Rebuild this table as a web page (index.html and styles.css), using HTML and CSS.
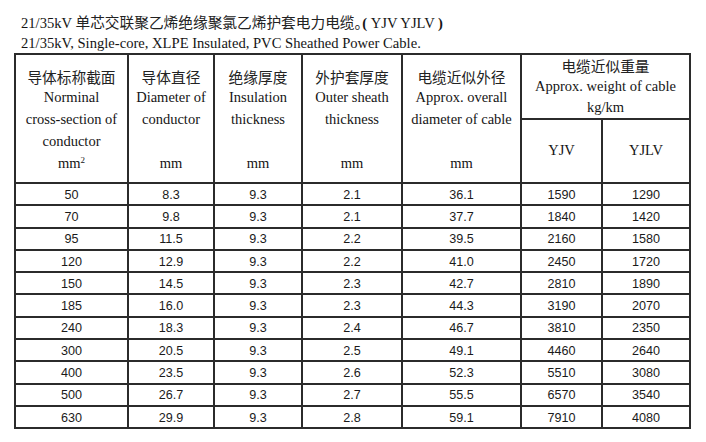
FILE: index.html
```html
<!DOCTYPE html>
<html lang="zh">
<head>
<meta charset="utf-8">
<title>21/35kV YJV YJLV</title>
<link rel="stylesheet" href="styles.css">
</head>
<body>
<div class="page">
  <p class="title">21/35kV <span class="zh">单芯交联聚乙烯绝缘聚氯乙烯护套电力电缆</span><span class="zh dot">。</span><b class="paren">(</b> YJV YJLV <b class="paren">)</b></p>
  <p class="title">21/35kV, Single-core, XLPE Insulated, PVC Sheathed Power Cable.</p>
  <table class="spec">
    <colgroup>
      <col class="c1"><col class="c2"><col class="c3"><col class="c4"><col class="c5"><col class="c6"><col class="c7">
    </colgroup>
    <thead>
      <tr class="h1">
        <th rowspan="2" class="main"><span class="ln zh">导体标称截面</span><span class="ln">Norminal</span><span class="ln">cross-section of</span><span class="ln">conductor</span><span class="ln">mm<sup>2</sup></span></th>
        <th rowspan="2" class="main"><span class="ln zh">导体直径</span><span class="ln">Diameter of</span><span class="ln">conductor</span><span class="ln">&nbsp;</span><span class="ln">mm</span></th>
        <th rowspan="2" class="main"><span class="ln zh">绝缘厚度</span><span class="ln">Insulation</span><span class="ln">thickness</span><span class="ln">&nbsp;</span><span class="ln">mm</span></th>
        <th rowspan="2" class="main"><span class="ln zh">外护套厚度</span><span class="ln">Outer sheath</span><span class="ln">thickness</span><span class="ln">&nbsp;</span><span class="ln">mm</span></th>
        <th rowspan="2" class="main"><span class="ln zh">电缆近似外径</span><span class="ln">Approx. overall</span><span class="ln">diameter of cable</span><span class="ln">&nbsp;</span><span class="ln">mm</span></th>
        <th colspan="2" class="grp"><span class="ln zh">电缆近似重量</span><span class="ln">Approx. weight of cable</span><span class="ln">kg/km</span></th>
      </tr>
      <tr class="h2">
        <th class="sub">YJV</th>
        <th class="sub">YJLV</th>
      </tr>
    </thead>
    <tbody>
      <tr><td>50</td><td>8.3</td><td>9.3</td><td>2.1</td><td>36.1</td><td>1590</td><td>1290</td></tr>
      <tr><td>70</td><td>9.8</td><td>9.3</td><td>2.1</td><td>37.7</td><td>1840</td><td>1420</td></tr>
      <tr><td>95</td><td>11.5</td><td>9.3</td><td>2.2</td><td>39.5</td><td>2160</td><td>1580</td></tr>
      <tr><td>120</td><td>12.9</td><td>9.3</td><td>2.2</td><td>41.0</td><td>2450</td><td>1720</td></tr>
      <tr><td>150</td><td>14.5</td><td>9.3</td><td>2.3</td><td>42.7</td><td>2810</td><td>1890</td></tr>
      <tr><td>185</td><td>16.0</td><td>9.3</td><td>2.3</td><td>44.3</td><td>3190</td><td>2070</td></tr>
      <tr><td>240</td><td>18.3</td><td>9.3</td><td>2.4</td><td>46.7</td><td>3810</td><td>2350</td></tr>
      <tr><td>300</td><td>20.5</td><td>9.3</td><td>2.5</td><td>49.1</td><td>4460</td><td>2640</td></tr>
      <tr><td>400</td><td>23.5</td><td>9.3</td><td>2.6</td><td>52.3</td><td>5510</td><td>3080</td></tr>
      <tr><td>500</td><td>26.7</td><td>9.3</td><td>2.7</td><td>55.5</td><td>6570</td><td>3540</td></tr>
      <tr><td>630</td><td>29.9</td><td>9.3</td><td>2.8</td><td>59.1</td><td>7910</td><td>4080</td></tr>
    </tbody>
  </table>
</div>
</body>
</html>
```

FILE: styles.css
```css
html, body {
  margin: 0;
  padding: 0;
  background: #ffffff;
}

body {
  font-family: "Liberation Serif", "Noto Sans CJK SC", serif;
  color: #151515;
}

.page {
  padding: 12px 0 0 14px;
}

.title {
  margin: 0;
  padding-left: 7px;
  font-size: 14.6px;
  line-height: 20px;
  white-space: nowrap;
}

.zh {
  font-family: "Noto Sans CJK SC", sans-serif;
  font-size: 14.7px;
  color: #222222;
}

.dot {
  letter-spacing: -7px;
}

.paren {
  font-weight: bold;
}

.spec {
  border-collapse: collapse;
  table-layout: fixed;
  width: 677px;
  margin: 0;
}

.c1 { width: 113px; }
.c2 { width: 86px; }
.c3 { width: 88px; }
.c4 { width: 100px; }
.c5 { width: 119px; }
.c6 { width: 81px; }
.c7 { width: 88px; }

.spec th,
.spec td {
  border: 2px solid #2b2b2b;
  padding: 0;
  text-align: center;
  vertical-align: middle;
  font-weight: normal;
  white-space: nowrap;
}

.spec th {
  font-family: "Liberation Serif", "Noto Sans CJK SC", serif;
  font-size: 14.5px;
  line-height: 21.7px;
}

.ln {
  display: block;
}

.h1 {
  height: 65px;
}

.h2 {
  height: 64px;
}

.spec .main {
  padding-top: 3px;
}

.spec .grp {
  line-height: 21px;
  padding: 0;
}

.spec sup {
  font-size: 9px;
  line-height: 0;
  vertical-align: 5px;
}

.spec td {
  font-family: "Liberation Sans", Arial, sans-serif;
  font-size: 12.6px;
  line-height: 16px;
  color: #1a1a1a;
  padding-top: 1px;
}

.spec tbody tr {
  height: 22.3px;
}
```
